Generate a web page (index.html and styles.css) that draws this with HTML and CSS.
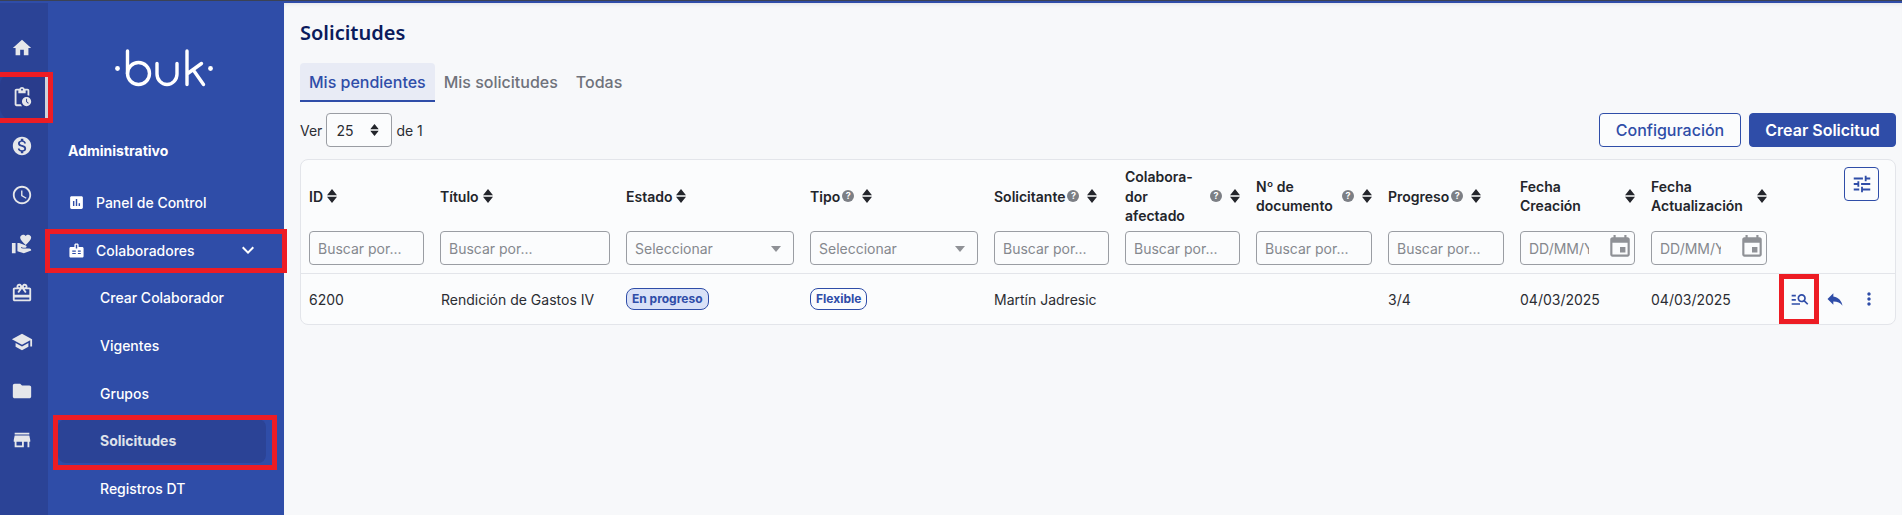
FILE: index.html
```html
<!DOCTYPE html>
<html lang="es">
<head>
<meta charset="utf-8">
<title>Solicitudes</title>
<link rel="stylesheet" href="styles.css">
</head>
<body>
<svg class="defs" width="0" height="0" aria-hidden="true">
  <symbol id="sort" viewBox="0 0 10 14"><path d="M5 0 10 6.2H0zM5 14 0 7.8h10z"/></symbol>
  <symbol id="cal" viewBox="0 0 24 24"><path d="M17 12h-5v5h5v-5zM16 1v2H8V1H6v2H5c-1.11 0-1.99.9-1.99 2L3 19c0 1.1.89 2 2 2h14c1.1 0 2-.9 2-2V5c0-1.1-.9-2-2-2h-1V1h-2zm3 18H5V8h14v11z"/></symbol>
</svg>
<div class="topline"></div>
<div class="app">
  <nav class="rail">
    <a class="rail-item"><svg viewBox="0 0 24 24"><path d="M10 20v-6h4v6h5v-8h3L12 3 2 12h3v8z"/></svg></a>
    <a class="rail-item active"><svg viewBox="0 0 24 24"><path d="M17 12c-2.76 0-5 2.24-5 5s2.24 5 5 5 5-2.24 5-5-2.24-5-5-5zm1.65 7.35L16.5 17.2V14h1v2.79l1.85 1.85-.7.71zM18 3h-3.18C14.4 1.84 13.3 1 12 1s-2.4.84-2.82 2H6c-1.1 0-2 .9-2 2v15c0 1.1.9 2 2 2h6.11c-.59-.57-1.07-1.25-1.42-2H6V5h2v3h8V5h2v5.08c.71.1 1.38.31 2 .6V5c0-1.1-.9-2-2-2zm-6 2c-.55 0-1-.45-1-1s.45-1 1-1 1 .45 1 1-.45 1-1 1z"/></svg></a>
    <a class="rail-item"><svg viewBox="0 0 24 24"><path d="M12 2C6.48 2 2 6.48 2 12s4.48 10 10 10 10-4.48 10-10S17.52 2 12 2zm1.41 16.09V20h-2.67v-1.93c-1.71-.36-3.16-1.46-3.27-3.4h1.96c.1 1.05.82 1.87 2.65 1.87 1.96 0 2.4-.98 2.4-1.59 0-.83-.44-1.61-2.67-2.14-2.48-.6-4.18-1.62-4.18-3.67 0-1.72 1.39-2.84 3.11-3.21V4h2.67v1.95c1.86.45 2.79 1.86 2.85 3.39H14.3c-.05-1.11-.64-1.87-2.22-1.87-1.5 0-2.4.68-2.4 1.64 0 .84.65 1.39 2.67 1.91s4.18 1.39 4.18 3.91c-.01 1.83-1.38 2.83-3.12 3.16z"/></svg></a>
    <a class="rail-item"><svg viewBox="0 0 24 24"><path d="M11.99 2C6.47 2 2 6.48 2 12s4.47 10 9.99 10C17.52 22 22 17.52 22 12S17.52 2 11.99 2zM12 20c-4.42 0-8-3.58-8-8s3.58-8 8-8 8 3.58 8 8-3.58 8-8 8zm.5-13H11v6l5.25 3.15.75-1.23-4.5-2.67z"/></svg></a>
    <a class="rail-item"><svg viewBox="0 0 24 24"><path d="M1 11h4v11H1zm15-7.75C16.65 2.49 17.66 2 18.7 2 20.55 2 22 3.45 22 5.3c0 2.27-2.91 4.9-6 7.7-3.09-2.81-6-5.44-6-7.7C10 3.45 11.45 2 13.3 2c1.04 0 2.05.49 2.7 1.25zM20 17h-7l-2.09-.73.33-.94L13 16h2.82c.65 0 1.18-.53 1.18-1.18 0-.49-.31-.93-.77-1.11L8.97 11H7v9.02L14 22l8.01-3c-.01-1.1-.9-2-2.01-2z"/></svg></a>
    <a class="rail-item"><svg viewBox="0 0 24 24"><path d="M20 6h-2.18c.11-.31.18-.65.18-1 0-1.66-1.34-3-3-3-1.05 0-1.96.54-2.5 1.35l-.5.67-.5-.68C10.96 2.54 10.05 2 9 2 7.34 2 6 3.34 6 5c0 .35.07.69.18 1H4c-1.11 0-1.99.89-1.99 2L2 19c0 1.11.89 2 2 2h16c1.11 0 2-.89 2-2V8c0-1.11-.89-2-2-2zm-5-2c.55 0 1 .45 1 1s-.45 1-1 1-1-.45-1-1 .45-1 1-1zM9 4c.55 0 1 .45 1 1s-.45 1-1 1-1-.45-1-1 .45-1 1-1zm11 15H4v-2h16v2zm0-5H4V8h5.08L7 10.83 8.62 12 11 8.76l1-1.36 1 1.36L15.38 12 17 10.83 14.92 8H20v6z"/></svg></a>
    <a class="rail-item"><svg viewBox="0 0 24 24"><path d="M5 13.18v4L12 21l7-3.82v-4L12 17l-7-3.82zM12 3L1 9l11 6 9-4.91V17h2V9L12 3z"/></svg></a>
    <a class="rail-item"><svg viewBox="0 0 24 24"><path d="M10 4H4c-1.1 0-1.99.9-1.99 2L2 18c0 1.1.9 2 2 2h16c1.1 0 2-.9 2-2V8c0-1.1-.9-2-2-2h-8l-2-2z"/></svg></a>
    <a class="rail-item"><svg viewBox="0 0 24 24"><path d="M20 4H4v2h16V4zm1 10v-2l-1-5H4l-1 5v2h1v6h10v-6h4v6h2v-6h1zm-9 4H6v-4h6v4z"/></svg></a>
  </nav>

  <aside class="sidebar">
    <svg class="logo" viewBox="0 0 100 38" aria-label="buk">
      <g fill="none" stroke="#fff" stroke-width="3.4" stroke-linecap="round" stroke-linejoin="round">
        <path d="M12.5 2v22.5"/>
        <circle cx="23.5" cy="24.5" r="11"/>
        <path d="M42 14.5V25a10 10.5 0 0 0 20 0V14.5"/>
        <path d="M72 2v33.5M72 25 86.5 14.5M78 20.5 88.5 35.5"/>
      </g>
      <circle cx="2.5" cy="19.5" r="2.4" fill="#fff"/>
      <circle cx="95.5" cy="19.5" r="2.4" fill="#fff"/>
    </svg>
    <div class="section-title">Administrativo</div>
    <a class="nav-row"><svg class="nav-icon" viewBox="0 0 24 24"><path d="M19 3H5c-1.1 0-2 .9-2 2v14c0 1.1.9 2 2 2h14c1.1 0 2-.9 2-2V5c0-1.1-.9-2-2-2zM9 17H7v-7h2v7zm4 0h-2V7h2v10zm4 0h-2v-4h2v4z"/></svg>Panel de Control</a>
    <a class="nav-row group"><svg class="nav-icon" viewBox="0 0 24 24"><path fill-rule="evenodd" d="M20 7h-5V4c0-1.1-.9-2-2-2h-2c-1.1 0-2 .9-2 2v3H4c-1.1 0-2 .9-2 2v11c0 1.1.9 2 2 2h16c1.1 0 2-.9 2-2V9c0-1.1-.9-2-2-2zM11 4h2v5h-2zM6 12h5v1.6H6zM6 15.5h5v1.6H6zM14 12h4v1.6h-4zM14 15.5h4v1.6h-4z"/></svg><span class="grow">Colaboradores</span><svg class="chevron" viewBox="0 0 24 24"><path d="M16.59 8.59L12 13.17 7.41 8.59 6 10l6 6 6-6z"/></svg></a>
    <a class="sub-row">Crear Colaborador</a>
    <a class="sub-row">Vigentes</a>
    <a class="sub-row">Grupos</a>
    <a class="sub-row current"><span class="current-pill">Solicitudes</span></a>
    <a class="sub-row">Registros DT</a>
  </aside>

  <main class="main">
    <h1 class="title">Solicitudes</h1>
    <div class="tabs">
      <a class="tab selected">Mis pendientes</a>
      <a class="tab">Mis solicitudes</a>
      <a class="tab">Todas</a>
    </div>
    <div class="toolbar">
      <div class="pager">Ver
        <div class="page-select"><span>25</span><svg class="sort small" viewBox="0 0 10 14"><use href="#sort"/></svg></div>
        de 1
      </div>
      <div class="buttons">
        <button class="btn outline">Configuración</button>
        <button class="btn solid">Crear Solicitud</button>
      </div>
    </div>

    <section class="card">
      <div class="cols head">
        <div class="th"><span>ID</span><svg class="sort tight"><use href="#sort"/></svg></div>
        <div class="th"><span>Título</span><svg class="sort tight"><use href="#sort"/></svg></div>
        <div class="th"><span>Estado</span><svg class="sort tight"><use href="#sort"/></svg></div>
        <div class="th"><span>Tipo</span><i class="help">?</i><svg class="sort"><use href="#sort"/></svg></div>
        <div class="th"><span>Solicitante</span><i class="help">?</i><svg class="sort"><use href="#sort"/></svg></div>
        <div class="th"><span class="fill">Colabora-<br>dor<br>afectado</span><i class="help">?</i><svg class="sort"><use href="#sort"/></svg></div>
        <div class="th"><span class="fill">Nº de<br>documento</span><i class="help">?</i><svg class="sort"><use href="#sort"/></svg></div>
        <div class="th"><span>Progreso</span><i class="help">?</i><svg class="sort"><use href="#sort"/></svg></div>
        <div class="th"><span class="fill">Fecha<br>Creación</span><svg class="sort"><use href="#sort"/></svg></div>
        <div class="th"><span class="fill">Fecha<br>Actualización</span><svg class="sort"><use href="#sort"/></svg></div>
        <button class="tune"><svg viewBox="0 0 24 24"><path d="M3 17v2h6v-2H3zM3 5v2h10V5H3zm10 16v-2h8v-2h-8v-2h-2v6h2zM7 9v2H3v2h4v2h2V9H7zm14 4v-2H11v2h10zm-6-4h2V7h4V5h-4V3h-2v6z"/></svg></button>
      </div>
      <div class="cols filters">
        <input class="field" placeholder="Buscar por...">
        <input class="field" placeholder="Buscar por...">
        <div class="field combo">Seleccionar<b class="caret"></b></div>
        <div class="field combo">Seleccionar<b class="caret"></b></div>
        <input class="field" placeholder="Buscar por...">
        <input class="field" placeholder="Buscar por...">
        <input class="field" placeholder="Buscar por...">
        <input class="field" placeholder="Buscar por...">
        <div class="date"><input class="field" placeholder="DD/MM/YYYY"><svg><use href="#cal"/></svg></div>
        <div class="date"><input class="field" placeholder="DD/MM/YYYY"><svg><use href="#cal"/></svg></div>
      </div>
      <div class="cols row">
        <div>6200</div>
        <div class="nudge">Rendición de Gastos IV</div>
        <div><span class="badge filled">En progreso</span></div>
        <div><span class="badge">Flexible</span></div>
        <div>Martín Jadresic</div>
        <div></div>
        <div></div>
        <div>3/4</div>
        <div>04/03/2025</div>
        <div>04/03/2025</div>
        <div class="actions">
          <svg viewBox="0 0 24 24"><path d="M7 9H2V7h5v2zm0 3H2v2h5v-2zm13.59 7l-3.83-3.83c-.8.52-1.74.83-2.76.83-2.76 0-5-2.24-5-5s2.24-5 5-5 5 2.24 5 5c0 1.02-.31 1.96-.83 2.75L22 17.59 20.59 19zM17 11c0-1.65-1.35-3-3-3s-3 1.35-3 3 1.35 3 3 3 3-1.35 3-3zM2 19h10v-2H2v2z"/></svg>
          <svg viewBox="0 0 24 24"><path d="M10 9V5l-7 7 7 7v-4.1c5 0 8.5 1.6 11 5.1-1-5-4-10-11-11z"/></svg>
          <svg viewBox="0 0 24 24"><path d="M12 8c1.1 0 2-.9 2-2s-.9-2-2-2-2 .9-2 2 .9 2 2 2zm0 2c-1.1 0-2 .9-2 2s.9 2 2 2 2-.9 2-2-.9-2-2-2zm0 6c-1.1 0-2 .9-2 2s.9 2 2 2 2-.9 2-2-.9-2-2-2z"/></svg>
        </div>
      </div>
    </section>
  </main>
</div>
<div class="mark mark-rail"></div>
<div class="mark mark-group"></div>
<div class="mark mark-current"></div>
<div class="mark mark-action"></div>
</body>
</html>
```

FILE: styles.css
```css
* { box-sizing: border-box; }
html, body { margin: 0; height: 515px; overflow: hidden; }
body { position: relative; font-family: Inter, "Liberation Sans", sans-serif; font-size: 14px; color: #2b2d33; background: #f7f8fa; }
.defs { position: absolute; }
.topline { height: 3px; background: #2f4da8; border-top: 1px solid #3b4254; }
.app { display: flex; height: 512px; }

.rail { width: 48px; flex: none; background: #2b4396; padding-top: 20px; }
.rail-item { display: flex; align-items: center; justify-content: center; height: 49px; padding-right: 4px; }
.rail-item svg { width: 22px; height: 22px; fill: #e6e7ea; }
.rail-item.active { background: #293c8c; border-right: 3px solid #cfd3dc; padding-right: 1px; border-radius: 14px 0 0 14px; }

.sidebar { width: 236px; flex: none; background: #2f4da8; padding-top: 46px; color: #fff; }
.logo { display: block; width: 100px; height: 38px; margin-left: 67px; }
.section-title { margin: 54px 0 18px 20px; font-weight: 700; line-height: 20px; }
.nav-row { display: flex; align-items: center; height: 47.6px; padding: 0 24px 0 20px; font-weight: 500; }
.nav-icon { width: 17px; height: 17px; fill: #fff; margin-right: 11px; flex: none; }
.grow { flex: 1; }
.chevron { width: 24px; height: 24px; fill: #fff; }
.sub-row { display: flex; align-items: center; height: 47.6px; padding-left: 52px; font-weight: 500; }
.sub-row.current { padding-left: 10px; }
.current-pill { display: block; width: 208px; line-height: 44px; padding-left: 42px; background: #2b4396; border-radius: 8px; font-weight: 700; color: #dfe2ea; }

.main { flex: 1; min-width: 0; padding: 0 6px 0 16px; box-shadow: inset 0 4px 4px -3px #dfe1e6; }
.title { margin: 0; padding-top: 16px; font: 600 20px/27px "Noto Sans", sans-serif; color: #0b1b5c; }
.tabs { display: flex; margin-top: 17px; }
.tab { height: 39px; padding: 0 9px; font-size: 16px; font-weight: 500; line-height: 38px; color: #6f727b; border-radius: 4px 4px 0 0; }
.tab.selected { background: #e8ebf5; color: #2f4da8; border-bottom: 2px solid #2f4da8; }
.toolbar { display: flex; justify-content: space-between; margin-top: 11px; }
.pager { display: flex; align-items: center; gap: 4px; }
.page-select { display: flex; align-items: center; justify-content: space-between; width: 66px; height: 34px; padding: 0 12px 0 9px; background: #fbfcfd; border: 1px solid #9a9da3; border-radius: 4px; font-size: 14px; }
.buttons { display: flex; gap: 8px; }
.btn { height: 34px; border-radius: 4px; font: 500 16px Inter, sans-serif; }
.outline { width: 142px; background: #fbfcfd; border: 1px solid #2f4da8; color: #2f4da8; }
.solid { width: 147px; background: #2f4da8; border: 1px solid #2f4da8; color: #fff; font-weight: 600; }

.card { margin-top: 12px; width: 1596px; height: 166px; background: #fbfcfd; border: 1px solid #e3e5ea; border-radius: 8px; padding-left: 8px; }
.cols { display: grid; grid-template-columns: 115px 170px 168px 168px 115px 115px 116px 116px 115px 116px 1fr; column-gap: 16px; }
.head { padding: 7px 0 5.5px; align-items: center; min-height: 71px; }
.th { display: flex; align-items: center; font-weight: 600; line-height: 19.5px; color: #23252b; }
.fill { flex: 1; }
.sort { width: 10px; height: 14px; margin-left: 8px; flex: none; fill: #23252b; }
.sort.tight { margin-left: 4px; }
.sort.small { margin: 0; width: 9px; height: 12px; }
.help { width: 12px; height: 12px; margin-left: 2px; flex: none; border-radius: 50%; background: #7c7f85; color: #fff; font: 700 9px/12px Inter, sans-serif; text-align: center; }
.tune { justify-self: end; align-self: start; margin-right: 16px; width: 35px; height: 34px; padding: 0; display: flex; align-items: center; justify-content: center; background: #fbfcfd; border: 1px solid #2f4da8; border-radius: 4px; }
.tune svg { width: 22px; height: 22px; fill: #2f4da8; }

.filters { margin: 0 0 0 -8px; padding: 0 0 8px 8px; border-bottom: 1px solid #e3e5ea; }
.field { width: 100%; height: 34px; padding: 0 8px; background: #fbfcfd; border: 1px solid #9a9da3; border-radius: 4px; font: 14px Inter, sans-serif; color: #85888e; outline: none; }
.field::placeholder { color: #85888e; opacity: 1; }
.combo { position: relative; display: flex; align-items: center; }
.caret { position: absolute; right: 12px; top: 14px; border: 5px solid transparent; border-top: 6px solid #8f9196; border-bottom: 0; }
.date { position: relative; }
.date .field { padding-right: 45px; }
.date svg { position: absolute; right: 2px; top: 3px; width: 26px; height: 26px; fill: #8f9196; }

.row { align-items: center; height: 50px; }
.nudge { padding-left: 1px; }
.badge { display: inline-block; height: 22px; padding: 0 5px; border: 1px solid #2f4da8; border-radius: 8px; font-size: 12px; font-weight: 700; line-height: 20px; color: #2f4da8; }
.badge.filled { background: #d9e1f7; }
.actions { display: flex; align-items: center; padding-left: 7px; gap: 14.5px; }
.actions svg { width: 20px; height: 20px; fill: #2f4da8; flex: none; }

.mark { position: absolute; border: 5px solid #ed1c24; }
.mark-rail { left: -6px; top: 72px; width: 59px; height: 51px; }
.mark-group { left: 45px; top: 229px; width: 242px; height: 44px; }
.mark-current { left: 53px; top: 415px; width: 224px; height: 55px; }
.mark-action { left: 1779px; top: 274px; width: 40px; height: 50px; }
```
